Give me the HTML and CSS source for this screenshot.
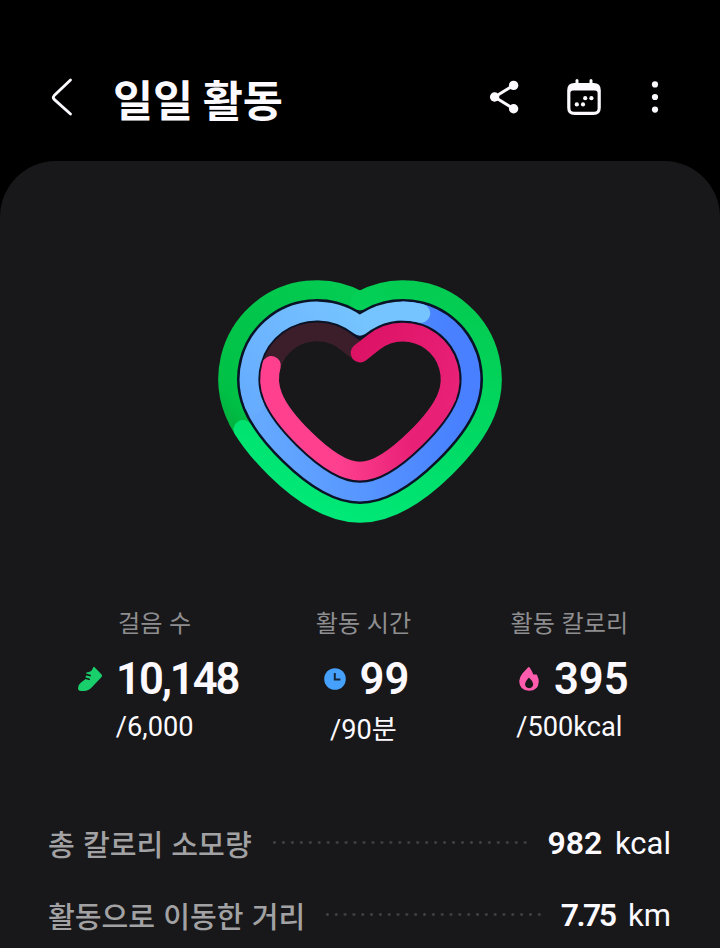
FILE: index.html
```html
<!DOCTYPE html>
<html lang="ko">
<head>
  <meta charset="UTF-8">
  <title>일일 활동</title>
  <link rel="stylesheet" href="styles.css">
</head>

<body>

<header class="topbar">
  <svg class="back" width="24" height="40" viewBox="0 0 24 40">
    <path d="M20.5 2 L4.2 17.6 Q2.4 19.5 4.2 21.4 L20.5 36" />
  </svg>
  <h1>일일 활동</h1>
  <div class="actions">
    <svg width="32" height="36" viewBox="0 0 32 36">
      <path d="M24.6 6.4 L5.6 18 L24.6 29.8" fill="none" stroke="#fcfaff" stroke-width="3" />
      <circle cx="24.6" cy="6.4" r="4.7" />
      <circle cx="5.6" cy="18" r="4.7" />
      <circle cx="24.6" cy="29.8" r="4.7" />
    </svg>
    <svg width="36" height="38" viewBox="0 0 36 38">
      <path d="M11 2.4 V9 M25 2.4 V9" stroke="#fcfaff" stroke-width="3" stroke-linecap="round" />
      <path fill-rule="evenodd" d="M8.5 5 H27.5 Q34.8 5 34.8 12.3 V29.8 Q34.8 37 27.5 37 H8.5 Q1.2 37 1.2 29.8 V12.3 Q1.2 5 8.5 5 Z M7 12.6 Q4.4 12.6 4.4 15.2 V30.3 Q4.4 33.8 7.9 33.8 H28.1 Q31.6 33.8 31.6 30.3 V15.2 Q31.6 12.6 29 12.6 Z" />
      <circle cx="10.8" cy="26.4" r="2.1" />
      <circle cx="17" cy="26.4" r="2.1" />
      <circle cx="19.2" cy="20.2" r="2.1" />
      <circle cx="25.4" cy="20.2" r="2.1" />
    </svg>
    <svg width="8" height="36" viewBox="0 0 8 36">
      <circle cx="4" cy="5.4" r="3.1" />
      <circle cx="4" cy="18" r="3.1" />
      <circle cx="4" cy="30.6" r="3.1" />
    </svg>
  </div>
</header>

<main class="panel">
  <svg class="heart" width="300" height="260" viewBox="210 270 300 260">
    <defs>
      <linearGradient id="green" gradientUnits="userSpaceOnUse" x1="390" y1="280" x2="300" y2="500">
        <stop offset="0" stop-color="#04cc52" />
        <stop offset="0.5" stop-color="#00da64" />
        <stop offset="1" stop-color="#00e877" />
      </linearGradient>
      <linearGradient id="greenLap" gradientUnits="userSpaceOnUse" x1="230" y1="430" x2="360" y2="290">
        <stop offset="0" stop-color="#00b03e" />
        <stop offset="0.14" stop-color="#00c146" />
        <stop offset="1" stop-color="#04cc52" />
      </linearGradient>
      <linearGradient id="blue" gradientUnits="userSpaceOnUse" x1="250" y1="420" x2="460" y2="400">
        <stop offset="0" stop-color="#66abff" />
        <stop offset="1" stop-color="#4880ff" />
      </linearGradient>
      <linearGradient id="blueEnd" gradientUnits="userSpaceOnUse" x1="250" y1="420" x2="370" y2="320">
        <stop offset="0" stop-color="#66abff" />
        <stop offset="1" stop-color="#76c4ff" />
      </linearGradient>
      <linearGradient id="pink" gradientUnits="userSpaceOnUse" x1="290" y1="420" x2="410" y2="410">
        <stop offset="0" stop-color="#ff408f" />
        <stop offset="0.35" stop-color="#ff408f" />
        <stop offset="1" stop-color="#e82076" />
      </linearGradient>
      <linearGradient id="pinkStart" gradientUnits="userSpaceOnUse" x1="355" y1="350" x2="455" y2="390">
        <stop offset="0" stop-color="#dc1265" />
        <stop offset="1" stop-color="#e92177" />
      </linearGradient>
    </defs>

    <!-- dark gap between rings -->
    <path class="gap" d="M360 326.3 A68 68 0 0 1 466 404.5 C458.8 422.4 442.7 440.8 429.9 453.4 C411.4 471.6 385.7 492.2 360 492.2 C334.3 492.2 308.6 471.6 290.1 453.4 C277.3 440.8 261.2 422.4 254 404.5 A68 68 0 0 1 360 326.3 Z" />

    <!-- steps -->
    <path class="ring" stroke="url(#greenLap)" d="M243 429.5 Q237.3 420.6 234.2 412.5 A89.3 89.3 0 0 1 360 300.7" />
    <path class="ring" stroke="url(#green)" d="M360 300.7 A89.3 89.3 0 0 1 485.8 412.5 C477.2 433.8 459.2 454.5 444.9 468.5 C423.5 489.5 393.5 513.4 360 513.4 C326.5 513.4 296.5 489.5 275.1 468.5 C264.7 458.3 252.3 444.5 243 429.5" />

    <!-- active time -->
    <path class="ring" stroke="url(#blue)" d="M403 311 A68 68 0 0 1 466 404.5 C458.8 422.4 442.7 440.8 429.9 453.4 C411.4 471.6 385.7 492.2 360 492.2 C334.3 492.2 308.6 471.6 290.1 453.4 C277.3 440.8 261.2 422.4 254 404.5" />
    <path class="ring" stroke="url(#blueEnd)" d="M254 404.5 A68 68 0 0 1 360 326.3 A68 68 0 0 1 420.8 313.4" />

    <!-- calories -->
    <path class="ring" stroke="#3c1e2b" d="M271.5 365.5 A47.2 47.2 0 0 1 346.1 342.1 L360 353" />
    <path class="ring" stroke="url(#pink)" d="M446.8 396.7 C441 411 426.8 427.3 415.4 438.5 C399.7 453.9 378.5 471.2 360 471.2 C341.5 471.2 320.3 453.9 304.6 438.5 C293.2 427.3 279 411 273.2 396.7 A47.2 47.2 0 0 1 271.5 365.5" />
    <path class="ring" stroke="url(#pinkStart)" d="M360 353 L373.9 342.1 A47.2 47.2 0 0 1 446.8 396.7" />
  </svg>

  <section class="stats">
    <div class="stat">
      <p class="label">걸음 수</p>
      <div class="value">
        <svg width="26" height="26" viewBox="0 0 26 26">
          <path fill="#18cf6c" d="M16.4 1 Q17 .6 17.6 1.2 L24.6 8.4 Q25.6 9.6 24.6 11 L14.6 21.4 Q11.5 24.8 7 24.9 H4 Q1 24.9 1 22.2 Q1 18.6 4 16.4 L8.6 13 L12.6 14.2 Q13.6 13.2 12.4 12.6 L8.6 11.4 Q8.3 9.6 9.8 9.4 L13.6 10.4 Q14.6 9.4 13.4 8.8 L9 7.6 Q9 6.2 10.8 6.2 Q14.8 6.2 16.4 1 Z" />
        </svg>
        <strong class="steps">10,148</strong>
      </div>
      <p class="goal">/6,000</p>
    </div>
    <div class="stat time">
      <p class="label">활동 시간</p>
      <div class="value">
        <svg width="22" height="22" viewBox="0 0 22 22">
          <circle cx="11" cy="11" r="10.8" fill="#45a1fb" />
          <path d="M10.8 5 V11.6 H16.4" fill="none" stroke="#16273c" stroke-width="2" />
        </svg>
        <strong>99</strong>
      </div>
      <p class="goal">/90분</p>
    </div>
    <div class="stat calories">
      <p class="label">활동 칼로리</p>
      <div class="value">
        <svg width="20" height="26" viewBox="0 0 20 26">
          <path fill="#ff5cad" fill-rule="evenodd" d="M9.2 1.2 Q10 .8 10.8 1.8 Q12.6 4.4 14.4 8.6 Q15.6 8.2 17.4 8.6 Q18.2 8.8 18.4 10 Q19.8 13 19.8 15.4 Q19.4 24.6 10 24.8 Q.6 24.4 .2 15.2 Q.4 11 3.4 7.4 Z M10.4 12 Q9.8 11.4 9.2 12.2 Q6.2 15.4 6 18 Q6.2 22 10.2 22.2 Q14 22 14.2 18 Q14 15.2 10.4 12 Z" />
        </svg>
        <strong>395</strong>
      </div>
      <p class="goal">/500kcal</p>
    </div>
  </section>

  <section class="details">
    <div class="row">
      <span class="name">총 칼로리 소모량</span>
      <span class="dots"></span>
      <span class="amount"><b>982</b> kcal</span>
    </div>
    <div class="row">
      <span class="name">활동으로 이동한 거리</span>
      <span class="dots"></span>
      <span class="amount distance"><b>7.75</b> km</span>
    </div>
  </section>
</main>

</body>
</html>
```
FILE: styles.css
```css
* { margin: 0; padding: 0; box-sizing: border-box; }
body {
  font-family: Roboto, 'Noto Sans CJK KR', sans-serif;
  background: #000;
  color: #fcfaff;
  height: 948px;
  overflow: hidden;
}
svg { display: block; flex: none; fill: #fcfaff; }
.topbar {
  display: flex;
  align-items: center;
  height: 161px;
  padding: 34px 61px 0 50px;
}
.back { fill: none; stroke: #fcfaff; stroke-width: 2.8; stroke-linecap: round; }
h1 {
  flex: 1;
  margin-left: 39px;
  font-family: 'Noto Sans CJK KR', sans-serif;
  font-size: 43.6px;
  font-weight: 700;
  line-height: 60px;
  letter-spacing: -0.2px;
  word-spacing: -2px;
  padding-top: 1px;
}
.actions { display: flex; align-items: center; margin-top: -2px; }
.actions svg:nth-child(2) { margin: 0 49px 0 45px; }
.panel {
  height: 800px;
  padding: 109px 49px 0;
  background: #18181a;
  border-radius: 56px 56px 0 0;
}
.heart { margin: 0 auto; fill: none; }
.heart path { fill: none; stroke-linejoin: round; }
.ring { stroke-width: 18.8; stroke-linecap: round; }
.gap { stroke: #0a1226; stroke-width: 25; }
.stats {
  display: grid;
  grid-template-columns: repeat(3, 1fr);
  margin: 74px -2px 0 2px;
}
.stat {
  display: flex;
  flex-direction: column;
  align-items: center;
}
.label {
  font-family: 'Noto Sans CJK KR', sans-serif;
  font-size: 24.1px;
  line-height: 36px;
  color: #8e8e90;
}
.value {
  display: flex;
  align-items: center;
  gap: 14px;
  height: 50px;
  margin: 14px 0 0 6px;
}
.value strong {
  font-size: 43.6px;
  font-weight: 600;
  line-height: 50px;
  padding-top: 2px;
}
.value .steps { letter-spacing: -2.1px; margin-left: -1px; }
.goal {
  margin-top: 7px;
  font-size: 27.2px;
  line-height: 32px;
}
.time { padding-left: 3px; }
.time .goal { margin-top: 10px; }
.calories .value { gap: 15px; margin-left: 9px; }
.details { margin-top: 61px; }
.row {
  display: flex;
  align-items: center;
  height: 72px;
}
.name {
  font-family: 'Noto Sans CJK KR', sans-serif;
  font-size: 29.1px;
  font-weight: 500;
  line-height: 40px;
  margin-left: -1px;
  color: #a2a2a4;
}
.dots {
  flex: 1;
  height: 3px;
  margin: 0 17px 1px 18px;
  background: radial-gradient(circle, #404042 1.1px, transparent 1.7px) 0 0 / 9px 3px round;
}
.amount {
  font-size: 31px;
  line-height: 40px;
  padding-top: 1px;
}
.amount b { font-size: 32px; font-weight: 600; margin-right: 5px; }
.distance b { letter-spacing: -2.6px; margin-right: 6px; }
```
